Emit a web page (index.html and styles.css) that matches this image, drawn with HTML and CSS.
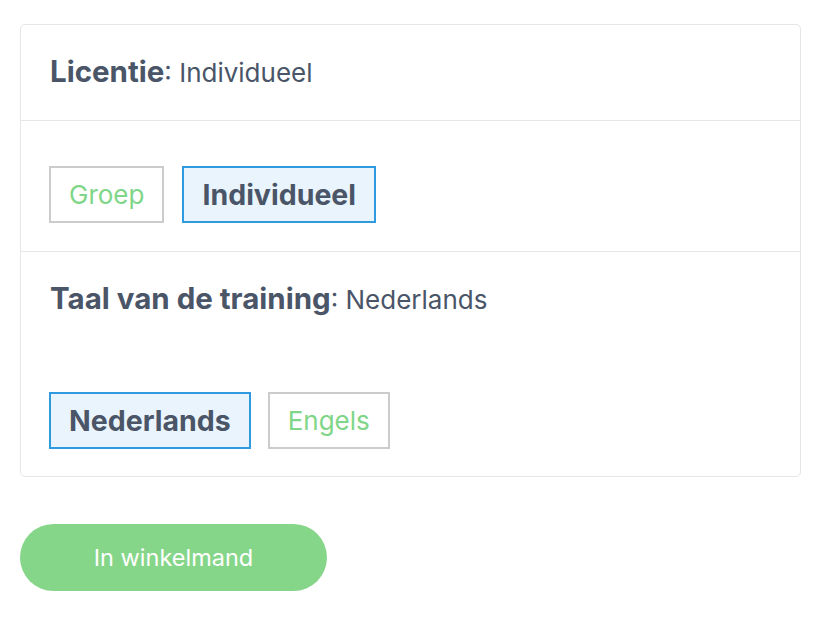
FILE: index.html
```html
<!DOCTYPE html>
<html>
<head>
    <link rel="stylesheet" href="styles.css">
</head>
<body>
    <div class="options">
        <div class="option-head">
            <span class="label">Licentie</span>: Individueel
        </div>
        <div class="option-values">
            <button class="choice">Groep</button>
            <button class="choice selected">Individueel</button>
        </div>
        <div class="option-block">
            <div class="option-title">
                <span class="label">Taal van de training</span>: Nederlands
            </div>
            <div class="choices">
                <button class="choice selected">Nederlands</button>
                <button class="choice">Engels</button>
            </div>
        </div>
    </div>

    <button class="cart-btn">In winkelmand</button>
</body>
</html>
```

FILE: styles.css
```css
body {
    margin: 0;
    padding: 24px 21px 0 20px;
    background-color: #fff;
    font-family: Inter, "Noto Sans", sans-serif;
    color: #4a5568;
}

.options {
    border: 1px solid #e5e5ea;
    border-radius: 5px;
}

.option-head {
    font-size: 26px;
    line-height: 35px;
    padding: 30px 29px;
    border-bottom: 1px solid #e5e5ea;
}

.label {
    font-size: 29.5px;
    line-height: 20px;
    font-weight: 700;
}

.option-values {
    display: flex;
    gap: 18px;
    padding: 45px 28px 28px;
    border-bottom: 1px solid #e5e5ea;
}

.option-block {
    padding: 30px 28px 27px;
}

.option-title {
    font-size: 26px;
    line-height: 35px;
    margin-bottom: 75px;
    padding-left: 1px;
}

.choices {
    display: flex;
    gap: 17px;
}

.choice {
    font-family: Inter, "Noto Sans", sans-serif;
    font-size: 26px;
    height: 57px;
    padding: 0 18px;
    background: #fff;
    border: 2px solid #cccccc;
    color: #7fd688;
    cursor: pointer;
}

.choice.selected {
    border-color: #2f9ae0;
    background: #e9f4fc;
    color: #4a5568;
    font-size: 28.5px;
    font-weight: 700;
}

.cart-btn {
    margin-top: 47px;
    width: 307px;
    height: 67px;
    border: none;
    border-radius: 34px;
    background: #86d68a;
    color: #fff;
    font-family: Inter, "Noto Sans", sans-serif;
    font-size: 23.5px;
    cursor: pointer;
}
```
